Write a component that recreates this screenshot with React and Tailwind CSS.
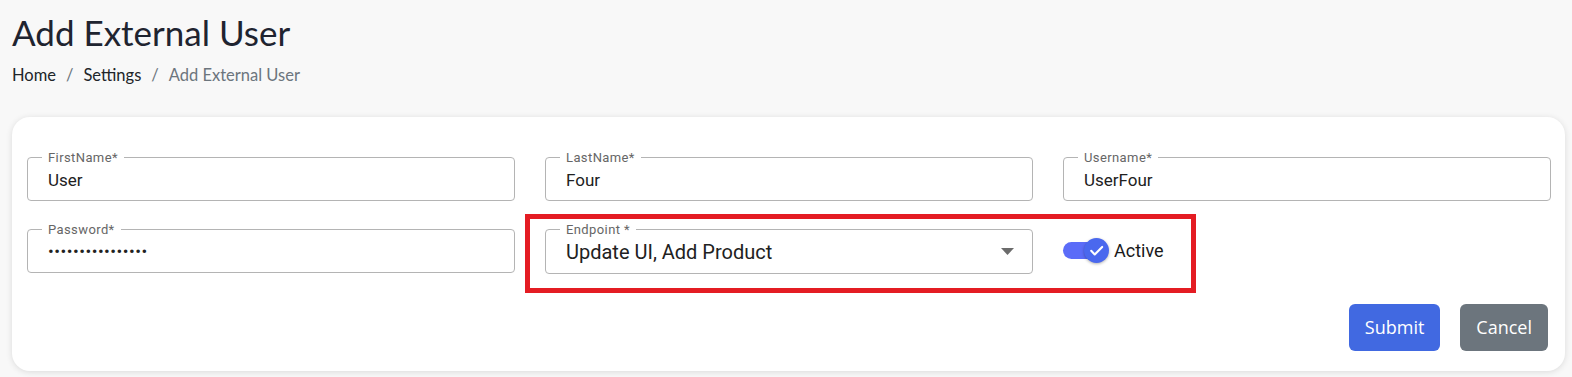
import React from "react";

/* ── FIELDS ───────────────────────────────────────────────────────────── */
const OutlinedField = ({ label, children, height = "h-[44px]" }) => (
  <div
    className={`relative flex items-center rounded-[4px] border border-[#b4b4b4] bg-white pl-[20px] pr-[18px] ${height}`}
  >
    <span className="absolute top-[-8px] left-[14px] bg-white px-[6px] font-['Roboto'] text-[13px] leading-[16px] tracking-[0.4px] text-[#666]">
      {label}
    </span>
    {children}
  </div>
);

const TextValue = ({ children }) => (
  <span className="pt-[2px] font-['Roboto'] text-[17px] leading-[20px] text-[#212121]">
    {children}
  </span>
);

const fields = [
  { label: "FirstName*", value: "User" },
  { label: "LastName*", value: "Four" },
  { label: "Username*", value: "UserFour" },
];

/* ── TOGGLE ───────────────────────────────────────────────────────────── */
const ActiveToggle = () => (
  <div className="flex h-[44px] items-center">
    <div className="relative h-[17px] w-[46px]">
      <div className="h-[17px] w-[38px] rounded-full bg-[#5b6cf8]" />
      <div className="absolute top-[-4px] left-[21px] flex h-[25px] w-[25px] items-center justify-center rounded-full bg-[#4a68ee] shadow-[0_1px_3px_rgba(0,0,0,0.3)]">
        <svg width="17" height="17" viewBox="0 0 24 24" fill="none">
          <path
            d="M4.5 12.5l5 5L20 7"
            stroke="white"
            strokeWidth="3"
            strokeLinecap="round"
            strokeLinejoin="round"
          />
        </svg>
      </div>
    </div>
    <span className="ml-[5px] font-['Roboto'] text-[18px] leading-[22px] text-[#1a1a1a]">
      Active
    </span>
  </div>
);

/* ══════════════════════════════════════════════════════════════════════
   MAIN PAGE
   ══════════════════════════════════════════════════════════════════════ */
export default function App() {
  return (
    <div className="h-[377px] overflow-hidden bg-[#f8f8f8] pt-[11px] pr-[7px] pl-[12px]">
      <h1 className="font-['Lato'] text-[35px] leading-[1.2] text-[#1f2430]">
        Add External User
      </h1>

      <nav className="mt-[13px] flex items-center gap-[10px] font-['Lato'] text-[16.5px] leading-[1.2]">
        <span className="text-[#212529]">Home</span>
        <span className="text-[#6c757d]">/</span>
        <span className="text-[#212529]">Settings</span>
        <span className="text-[#6c757d]">/</span>
        <span className="text-[#6c757d]">Add External User</span>
      </nav>

      {/* ── FORM CARD ───────────────────────────────────────────────────── */}
      <div className="relative mt-[31px] rounded-[18px] bg-white pt-[40px] pr-[14px] pb-[20px] pl-[15px] shadow-[0_1px_6px_rgba(0,0,0,0.12)]">
        <div className="grid grid-cols-3 gap-x-[30px] gap-y-[28px]">
          {fields.map((f) => (
            <OutlinedField key={f.label} label={f.label}>
              <TextValue>{f.value}</TextValue>
            </OutlinedField>
          ))}

          <OutlinedField label="Password*">
            <span className="font-['Roboto'] text-[17px] leading-[20px] tracking-[0.5px] text-[#212121]">
              ••••••••••••••••
            </span>
          </OutlinedField>

          <OutlinedField label="Endpoint *" height="h-[45px]">
            <span className="flex-1 pt-[1px] font-['Roboto'] text-[20px] leading-[24px] text-[#212121]">
              Update UI, Add Product
            </span>
            <svg width="13" height="7" viewBox="0 0 13 7">
              <path d="M0 0h13L6.5 7z" fill="#6b6b6b" />
            </svg>
          </OutlinedField>

          <ActiveToggle />
        </div>

        <div className="mt-[30px] mr-[3px] flex justify-end gap-[20px] font-['Open_Sans'] text-[18px] leading-[27px] text-white">
          <button className="rounded-[6px] bg-[#4169e1] px-[16px] py-[10px]">
            Submit
          </button>
          <button className="rounded-[6px] bg-[#6c757d] px-[16px] py-[10px]">
            Cancel
          </button>
        </div>

        {/* highlight annotation */}
        <div className="pointer-events-none absolute top-[97px] left-[513px] h-[79px] w-[671px] border-[5px] border-[#e41c23]" />
      </div>
    </div>
  );
}
